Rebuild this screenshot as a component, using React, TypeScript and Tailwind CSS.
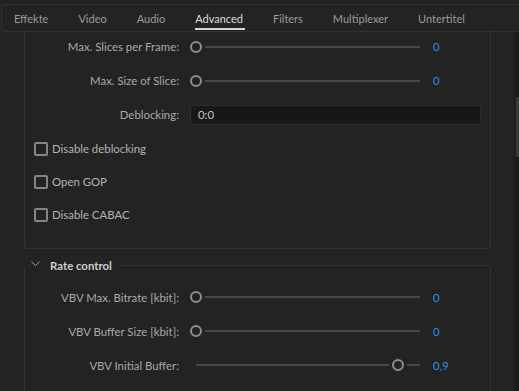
import React from 'react';

const TABS = ['Effekte', 'Video', 'Audio', 'Advanced', 'Filters', 'Multiplexer', 'Untertitel'];

function Slider({ value }: { value: number }) {
  return (
    <div className="relative ml-[11px] h-[12px] w-[230px]">
      <div className="absolute left-[6px] right-0 top-[5px] h-[2px] bg-[#474747]" />
      <div
        className="absolute top-0 h-[12px] w-[12px] rounded-full border-2 border-[#8e8e8e] bg-[#232323] shadow-[0_0_0_3px_#232323]"
        style={{ left: value * 224 }}
      />
    </div>
  );
}

function SliderRow({ label, value, shown }: { label: string; value: number; shown: string }) {
  return (
    <div className="flex h-[34px] items-center">
      <div className="w-[154px] text-right text-[#a9a9a9]">{label}</div>
      <Slider value={value} />
      <div className="ml-[13px] text-[#2f8fe8]">{shown}</div>
    </div>
  );
}

function CheckRow({ label }: { label: string }) {
  return (
    <div className="flex h-[33px] items-center pl-[9px]">
      <div className="h-[14px] w-[14px] rounded-[2px] border-2 border-[#858585]" />
      <span className="ml-[4px] text-[#b4b4b4]">{label}</span>
    </div>
  );
}

export default function App() {
  return (
    <div className="flex h-[391px] w-[519px] flex-col overflow-hidden bg-[#232323] font-['Lato',sans-serif] text-[11.4px] leading-none">
      <div className="h-[4px] shrink-0" />
      <div className="ml-[1px] flex h-[28px] shrink-0 items-stretch rounded-l-[4px] border-y border-l border-[#313131] pl-[12px] text-[11px]">
        <div className="flex gap-[30px]">
          {TABS.map((t) => (
            <div
              key={t}
              className={
                'relative flex items-center ' +
                (t === 'Advanced' ? 'text-[#dcdcdc]' : 'text-[#9b9b9b]')
              }
            >
              {t}
              {t === 'Advanced' && (
                <div className="absolute bottom-[1px] left-0 right-[-2px] h-[2px] bg-[#d4d4d4]" />
              )}
            </div>
          ))}
        </div>
      </div>

      <div className="flex min-h-0 flex-1">
        <div className="min-w-0 flex-1">
          <div className="-mt-[2px] ml-[24px] w-[467px] rounded-b-[4px] border-x border-b border-[#333333] pb-[17px]">
            <SliderRow label="Max. Slices per Frame:" value={0} shown="0" />
            <SliderRow label="Max. Size of Slice:" value={0} shown="0" />
            <div className="flex h-[34px] items-center">
              <div className="w-[154px] text-right text-[#a9a9a9]">Deblocking:</div>
              <div className="ml-[11px] flex h-[20px] w-[291px] items-center rounded-[3px] border border-[#2e2e2e] bg-[#171717] pl-[7px] text-[#c4c4c4]">
                0:0
              </div>
            </div>
            <CheckRow label="Disable deblocking" />
            <CheckRow label="Open GOP" />
            <CheckRow label="Disable CABAC" />
          </div>

          <fieldset className="mt-[11px] ml-[24px] w-[467px] rounded-[4px] border border-[#333333] pt-[9px]">
            <legend className="ml-[0px] flex items-center pl-[6px] pr-[6px]">
              <svg width="9" height="6" viewBox="0 0 9 6" className="mr-[10px] mt-[-3px]">
                <path d="M0.5 0.8 L4.5 4.6 L8.5 0.8" fill="none" stroke="#a0a0a0" strokeWidth="1" />
              </svg>
              <span className="font-bold text-[#cfcfcf]">Rate control</span>
            </legend>
            <SliderRow label="VBV Max. Bitrate [kbit]:" value={0} shown="0" />
            <SliderRow label="VBV Buffer Size [kbit]:" value={0} shown="0" />
            <SliderRow label="VBV Initial Buffer:" value={0.9} shown="0,9" />
            <div className="h-[40px]" />
          </fieldset>
        </div>

        <div className="relative w-[4px] shrink-0 bg-[#1b1b1b]">
          <div className="absolute left-[1px] right-0 top-[65px] h-[60px] rounded-l-[2px] bg-[#3a3a3a]" />
        </div>
      </div>
    </div>
  );
}
